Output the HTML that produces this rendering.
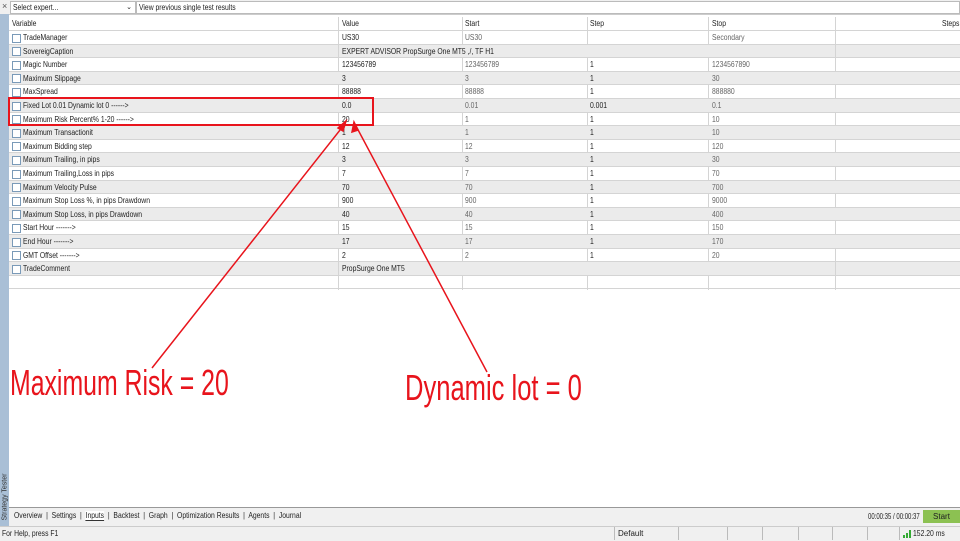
<!DOCTYPE html>
<html><head><style>
body{margin:0;width:960px;height:540px;position:relative;overflow:hidden;background:#fff;font-family:"Liberation Sans Narrow","Liberation Sans",sans-serif;font-size:8px;color:#222}
.a{position:absolute}
.row{position:absolute;left:9px;width:951px;height:13.6px;border-bottom:1px solid #d4d4d4;box-sizing:border-box}
.g{background:#ebebeb}
.c{position:absolute;top:2px;white-space:nowrap;transform:scaleX(.85);transform-origin:left}
.cb{position:absolute;left:3px;top:2.5px;width:7px;height:7px;border:1px solid #7a9ab8;background:#fff}
.vl{position:absolute;top:17px;height:273px;width:1px;background:#d4d4d4}
.big{position:absolute;color:#e8141c;font-family:"Liberation Sans",sans-serif;font-size:36px;white-space:nowrap;transform-origin:left top}
</style></head><body>
<div class="a" style="left:0;top:0;width:960px;height:14px;background:#f0f0f0;border-bottom:1px solid #ccc"></div>
<div class="a" style="left:2px;top:1px;font-size:9px;color:#555">×</div>
<div class="a" style="left:10px;top:1px;width:124px;height:11px;background:#fff;border:1px solid #bbb"><span class="c" style="left:2px;top:1px">Select expert...</span><span class="a" style="right:3px;top:1px;font-size:7px">⌄</span></div>
<div class="a" style="left:136px;top:1px;width:822px;height:11px;background:#fff;border:1px solid #bbb"><span class="c" style="left:2px;top:1px">View previous single test results</span></div>
<div class="a" style="left:0;top:14px;width:9px;height:512px;background:#a9bfd6"></div>
<div class="a" style="left:-24px;top:488px;width:58px;font-size:7px;color:#333;transform:rotate(-90deg);white-space:nowrap">Strategy Tester</div>
<div class="vl" style="left:338px"></div><div class="vl" style="left:462px"></div><div class="vl" style="left:587px"></div><div class="vl" style="left:708px"></div><div class="vl" style="left:835px"></div>
<div class="row" style="top:17px;height:14px;background:transparent"><span class="c" style="left:3px">Variable</span><span class="c" style="left:333px">Value</span><span class="c" style="left:456px">Start</span><span class="c" style="left:581px">Step</span><span class="c" style="left:703px">Stop</span><span class="c" style="left:933px">Steps</span></div>
<div id="rows"></div>
<script>
var d=[["TradeManager","US30","US30","","Secondary"],["SovereigCaption","EXPERT ADVISOR PropSurge One MT5 ,/, TF H1","","",""],["Magic Number","123456789","123456789","1","1234567890"],["Maximum Slippage","3","3","1","30"],["MaxSpread","88888","88888","1","888880"],["Fixed Lot 0.01 Dynamic lot 0 ------>","0.0","0.01","0.001","0.1"],["Maximum Risk Percent% 1-20 ------>","20","1","1","10"],["Maximum Transactionit","1","1","1","10"],["Maximum Bidding step","12","12","1","120"],["Maximum Trailing, in pips","3","3","1","30"],["Maximum Trailing,Loss in pips","7","7","1","70"],["Maximum Velocity Pulse","70","70","1","700"],["Maximum Stop Loss %, in pips Drawdown","900","900","1","9000"],["Maximum Stop Loss, in pips Drawdown","40","40","1","400"],["Start Hour ------->","15","15","1","150"],["End Hour ------->","17","17","1","170"],["GMT Offset ------->","2","2","1","20"],["TradeComment","PropSurge One MT5","","",""]];
var h="";d.forEach(function(r,i){var sp=(i==1||i==17);h+='<div class="row'+(i%2?' g':'')+'" style="top:'+(31+13.6*i)+'px;'+(sp?'z-index:2;':'')+'"><span class="cb"></span><span class="c" style="left:14px">'+r[0]+'</span><span class="c" style="left:333px">'+r[1]+'</span><span class="c" style="left:456px;color:#666">'+r[2]+'</span><span class="c" style="left:581px">'+r[3]+'</span><span class="c" style="left:703px;color:#666">'+r[4]+'</span>'+(sp?'<span class="a" style="left:329px;top:0;width:1px;height:13px;background:#d4d4d4"></span><span class="a" style="left:826px;top:0;width:1px;height:13px;background:#d4d4d4"></span>':'')+'</div>';});
h+='<div class="row" style="top:'+(31+13.6*18)+'px"></div>';
document.getElementById("rows").innerHTML=h;
</script>
<div class="a" style="left:8px;top:97px;width:366px;height:29px;border:2px solid #e8141c;box-sizing:border-box;z-index:3"></div>
<svg class="a" style="left:0;top:0;z-index:3" width="960" height="540">
<g stroke="#e8141c" stroke-width="1.5" fill="#e8141c">
<line x1="152" y1="368" x2="344" y2="125"/><polygon points="346,121 338,128 343,131"/>
<line x1="487" y1="372" x2="356" y2="126"/><polygon points="354,122 352,132 358,130"/>
</g></svg>
<div class="big" style="left:10px;top:362px;transform:scaleX(.69)">Maximum Risk = 20</div>
<div class="big" style="left:405px;top:367px;transform:scaleX(.71)">Dynamic lot = 0</div>
<div class="a" style="left:9px;top:507px;width:951px;height:18px;background:#f0f0f0;border-top:1px solid #999"></div>
<div class="a" style="left:14px;top:511px;font-size:8px;white-space:nowrap;transform:scaleX(.85);transform-origin:left">Overview &nbsp;|&nbsp; Settings &nbsp;|&nbsp; <span style="background:#fff;border-bottom:1px solid #333">Inputs</span> &nbsp;|&nbsp; Backtest &nbsp;|&nbsp; Graph &nbsp;|&nbsp; Optimization Results &nbsp;|&nbsp; Agents &nbsp;|&nbsp; Journal</div>
<div class="a" style="left:868px;top:512px;font-size:8px;transform:scaleX(.75);transform-origin:left;white-space:nowrap">00:00:35 / 00:00:37</div>
<div class="a" style="left:923px;top:510px;width:37px;height:13px;background:#8cc152;text-align:center;font-size:8px;line-height:13px">Start</div>
<div class="a" style="left:0;top:526px;width:960px;height:14px;background:#f0f0f0;border-top:1px solid #ccc"></div>
<div class="a" style="left:2px;top:529px;font-size:8px;transform:scaleX(.85);transform-origin:left;white-space:nowrap">For Help, press F1</div>
<div class="a" style="left:614px;top:527px;width:1px;height:13px;background:#bbb"></div><div class="a" style="left:618px;top:529px;font-size:8px">Default</div>
<div class="a" style="left:678px;top:527px;width:1px;height:13px;background:#bbb"></div><div class="a" style="left:727px;top:527px;width:1px;height:13px;background:#bbb"></div><div class="a" style="left:762px;top:527px;width:1px;height:13px;background:#bbb"></div><div class="a" style="left:798px;top:527px;width:1px;height:13px;background:#bbb"></div><div class="a" style="left:832px;top:527px;width:1px;height:13px;background:#bbb"></div><div class="a" style="left:867px;top:527px;width:1px;height:13px;background:#bbb"></div><div class="a" style="left:899px;top:527px;width:1px;height:13px;background:#bbb"></div>
<svg class="a" style="left:903px;top:530px" width="9" height="8"><rect x="0" y="5" width="2" height="3" fill="#3a3"/><rect x="3" y="3" width="2" height="5" fill="#3a3"/><rect x="6" y="0" width="2" height="8" fill="#3a3"/></svg>
<div class="a" style="left:913px;top:529px;font-size:8px;transform:scaleX(.85);transform-origin:left;white-space:nowrap">152.20 ms</div>
</body></html>
